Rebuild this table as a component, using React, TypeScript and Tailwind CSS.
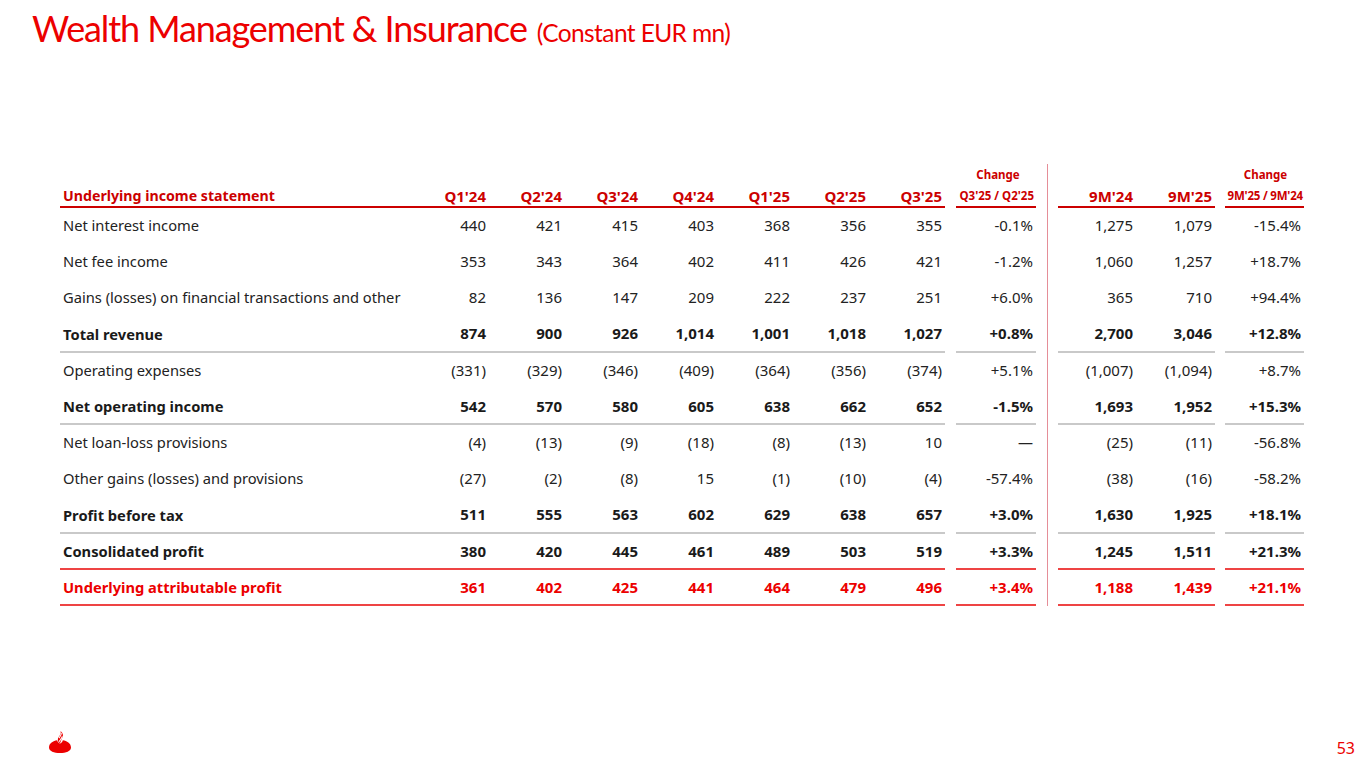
import React from "react";

type Row = {
  label: string;
  q: string[];
  c1: string;
  n: string[];
  c2: string;
  kind: "normal" | "bold" | "red";
  line: "none" | "gray" | "red";
};

const rows: Row[] = [
  { label: "Net interest income", q: ["440", "421", "415", "403", "368", "356", "355"], c1: "-0.1%", n: ["1,275", "1,079"], c2: "-15.4%", kind: "normal", line: "none" },
  { label: "Net fee income", q: ["353", "343", "364", "402", "411", "426", "421"], c1: "-1.2%", n: ["1,060", "1,257"], c2: "+18.7%", kind: "normal", line: "none" },
  { label: "Gains (losses) on financial transactions and other", q: ["82", "136", "147", "209", "222", "237", "251"], c1: "+6.0%", n: ["365", "710"], c2: "+94.4%", kind: "normal", line: "none" },
  { label: "Total revenue", q: ["874", "900", "926", "1,014", "1,001", "1,018", "1,027"], c1: "+0.8%", n: ["2,700", "3,046"], c2: "+12.8%", kind: "bold", line: "gray" },
  { label: "Operating expenses", q: ["(331)", "(329)", "(346)", "(409)", "(364)", "(356)", "(374)"], c1: "+5.1%", n: ["(1,007)", "(1,094)"], c2: "+8.7%", kind: "normal", line: "none" },
  { label: "Net operating income", q: ["542", "570", "580", "605", "638", "662", "652"], c1: "-1.5%", n: ["1,693", "1,952"], c2: "+15.3%", kind: "bold", line: "gray" },
  { label: "Net loan-loss provisions", q: ["(4)", "(13)", "(9)", "(18)", "(8)", "(13)", "10"], c1: "—", n: ["(25)", "(11)"], c2: "-56.8%", kind: "normal", line: "none" },
  { label: "Other gains (losses) and provisions", q: ["(27)", "(2)", "(8)", "15", "(1)", "(10)", "(4)"], c1: "-57.4%", n: ["(38)", "(16)"], c2: "-58.2%", kind: "normal", line: "none" },
  { label: "Profit before tax", q: ["511", "555", "563", "602", "629", "638", "657"], c1: "+3.0%", n: ["1,630", "1,925"], c2: "+18.1%", kind: "bold", line: "gray" },
  { label: "Consolidated profit", q: ["380", "420", "445", "461", "489", "503", "519"], c1: "+3.3%", n: ["1,245", "1,511"], c2: "+21.3%", kind: "bold", line: "red" },
  { label: "Underlying attributable profit", q: ["361", "402", "425", "441", "464", "479", "496"], c1: "+3.4%", n: ["1,188", "1,439"], c2: "+21.1%", kind: "red", line: "red" },
];

const grid =
  "grid grid-cols-[353px_repeat(7,76px)_11px_80px_22px_78px_79px_10px_79px]";

function Sep() {
  return (
    <div className="flex justify-center h-full">
      <div className="w-px h-full bg-[#e58e98]" />
    </div>
  );
}

function Logo() {
  return (
    <svg width="24" height="24" viewBox="0 0 24 24">
      <path
        d="M1 17.5 C1 13.2 5.2 10.9 9.2 10.3 C9.4 11.6 10.2 12.8 12 13.6 C13.8 12.8 14.6 11.6 14.8 10.3 C18.8 10.9 23 13.2 23 17.5 C23 21.2 18 23 12 23 C6 23 1 21.2 1 17.5 Z"
        fill="#ec0000"
      />
      <path
        d="M12 13.2 C9.2 11.4 9.4 8.6 11.2 6.3 C12.6 4.5 13 3 12.6 1 C15.2 3 15.6 5.9 14.2 8.1 C13.2 9.8 13 11.3 12 13.2 Z"
        fill="#ec0000"
      />
      <path d="M11 8.2 C12.6 6.3 13.6 4.8 13.3 2.8" stroke="#fff" strokeWidth="1.1" fill="none" />
      <path d="M11.2 11.6 C12.4 9.6 13.9 8.3 14.3 6.4" stroke="#fff" strokeWidth="1.1" fill="none" />
    </svg>
  );
}

export default function App() {
  const font = { fontFamily: '"Noto Sans", "Open Sans", sans-serif' };
  return (
    <div className="w-[1365px] h-[768px] bg-white flex flex-col overflow-hidden" style={font}>
      <div className="pl-[32px] pt-[6px] h-[164px] flex items-start">
        <div className="flex items-baseline text-[#ec0000]" style={{ fontFamily: 'Lato, "Noto Sans", sans-serif' }}>
          <span className="text-[36px] leading-[44px] tracking-[-1.1px]">Wealth Management &amp; Insurance</span>
          <span className="text-[24.5px] ml-[10px] tracking-[-0.6px]">(Constant EUR mn)</span>
        </div>
      </div>

      <div className="ml-[60px] flex flex-col">
        {/* header */}
        <div className={`${grid} h-[44px]`}>
          <div className="flex items-end pl-[3px] border-b-2 border-[#cc0000] text-[14.2px] font-bold text-[#cc0000] leading-[20px]">
            Underlying income statement
          </div>
          {["Q1'24", "Q2'24", "Q3'24", "Q4'24", "Q1'25", "Q2'25", "Q3'25"].map((h) => (
            <div key={h} className="flex items-end justify-end pr-[3px] border-b-2 border-[#cc0000] text-[15px] font-bold text-[#cc0000] leading-[20px]">
              {h}
            </div>
          ))}
          <div />
          <div className="flex flex-col items-end border-b-2 border-[#cc0000] text-[#cc0000] font-bold text-[11.5px]">
            <div className="h-[22px] w-full flex items-center justify-center pl-[4px]">Change</div>
            <div className="h-[20px] flex items-center pr-[2px]">Q3'25 / Q2'25</div>
          </div>
          <Sep />
          {["9M'24", "9M'25"].map((h) => (
            <div key={h} className="flex items-end justify-end pr-[3px] border-b-2 border-[#cc0000] text-[15px] font-bold text-[#cc0000] leading-[20px]">
              {h}
            </div>
          ))}
          <div />
          <div className="flex flex-col items-end border-b-2 border-[#cc0000] text-[#cc0000] font-bold text-[11.5px]">
            <div className="h-[22px] w-full flex items-center justify-center pl-[2px]">Change</div>
            <div className="h-[20px] flex items-center pr-[1px] tracking-[-0.2px]">9M'25 / 9M'24</div>
          </div>
        </div>

        {rows.map((r) => {
          const text =
            r.kind === "red"
              ? "font-bold text-[#ec0000]"
              : r.kind === "bold"
              ? "font-bold text-[#1a1a1a]"
              : "text-[#222222]";
          const border =
            r.line === "gray"
              ? "border-b-2 border-[#c9c9c9]"
              : r.line === "red"
              ? "border-b-2 border-[#ee4444]"
              : "border-b-2 border-transparent";
          const cell = `flex items-center justify-end pr-[3px] text-[15px] ${border}`;
          return (
            <div key={r.label} className={`${grid} h-[36.2px] ${text}`}>
              <div className={`flex items-center pl-[3px] text-[14.7px] ${border}`}>{r.label}</div>
              {r.q.map((v, i) => (
                <div key={i} className={cell}>{v}</div>
              ))}
              <div />
              <div className={cell}>{r.c1}</div>
              <Sep />
              {r.n.map((v, i) => (
                <div key={i} className={cell}>{v}</div>
              ))}
              <div />
              <div className={cell}>{r.c2}</div>
            </div>
          );
        })}
      </div>

      <div className="mt-auto flex items-start justify-between pl-[48px] pr-[10px] h-[40px]">
        <div className="mt-[2px]">
          <Logo />
        </div>
        <span className="text-[16px] leading-[20px] mt-[10px] text-[#ec0000]">53</span>
      </div>
    </div>
  );
}
